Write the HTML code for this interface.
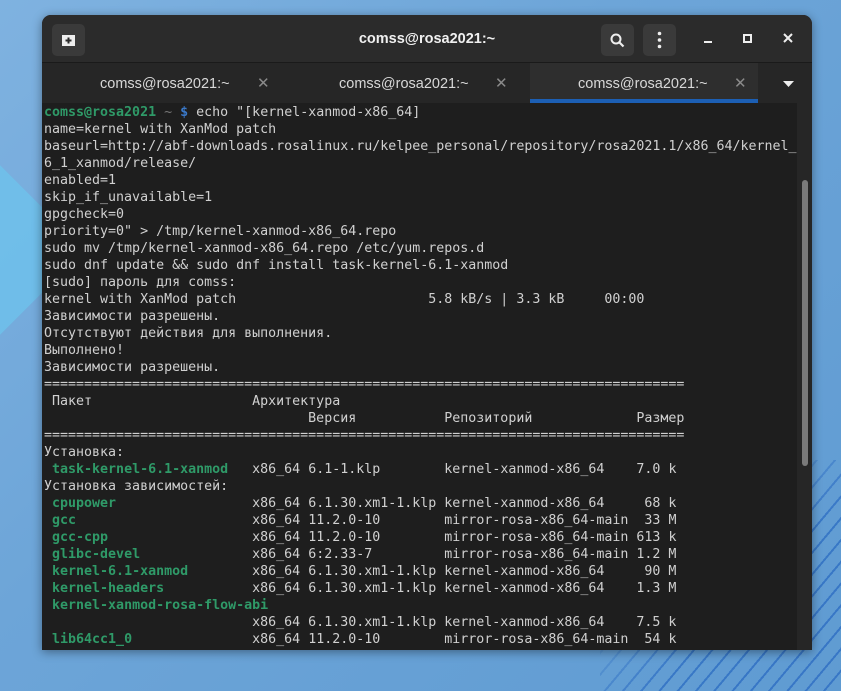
<!DOCTYPE html>
<html style="width:841px;height:691px;overflow:hidden"><head><meta charset="utf-8"><style>
*{margin:0;padding:0;box-sizing:border-box}
body{width:841px;height:691px;overflow:hidden;position:relative;
background:linear-gradient(135deg,#7fb2e0 0%,#6da5d8 40%,#5f9bd2 100%);font-family:"Liberation Sans",sans-serif}
.dia{position:absolute;left:-60px;top:190px;width:120px;height:120px;transform:rotate(45deg);background:#6cc4ee;opacity:.7}
.stripes{position:absolute;left:600px;top:460px;width:241px;height:231px;
background:repeating-linear-gradient(-50deg,transparent 0 12px,#2f6fc4 12px 14px);opacity:.8;
-webkit-mask:linear-gradient(135deg,transparent 35%,#000 60%)}
.win{position:absolute;left:42px;top:15px;width:770px;height:635px;background:#1e1e1e;border-radius:9px 9px 0 0;overflow:hidden;box-shadow:0 2px 10px rgba(0,0,0,.4)}
.hdr{position:absolute;left:0;top:0;width:770px;height:48px;background:#2b2b2b;border-bottom:1px solid #1a1a1a}
.title{position:absolute;left:0;width:770px;top:16px;text-align:center;color:#f0f0f0;font-weight:bold;font-size:14.5px}
.btn{position:absolute;top:9px;width:33px;height:32px;background:#3a3a3a;border-radius:5px}
.tabs{position:absolute;left:0;top:48px;width:770px;height:40px;background:#262626}
.tab{position:absolute;top:1px;height:40px;color:#d8d8d8;font-size:14.5px;line-height:40px}
.x{position:absolute;top:1px;color:#8a8a8a;font-size:15px;line-height:40px}
.term{position:absolute;left:2px;top:89px;font-family:"DejaVu Sans Mono","Liberation Mono",monospace;font-size:13.3px;line-height:17px;color:#d0d0d0;white-space:pre}
.g{color:#2f9a68;font-weight:bold}
.b{color:#3a78c8;font-weight:bold}
.gr{color:#777}
.sb{position:absolute;left:755px;top:88px;width:15px;height:547px;background:#262626}
.th{position:absolute;left:760px;top:165px;width:6px;height:286px;background:#7a7a7a;border-radius:3px}
</style></head><body>
<div class="dia"></div><div class="stripes"></div>
<div class="win">
 <div class="hdr">
  <div class="btn" style="left:10px"><svg width="33" height="32"><path d="M10 11h13v11H10z" fill="#eee"/><path d="M16.5 13.5v6M13.5 16.5h6" stroke="#2b2b2b" stroke-width="2"/></svg></div>
  <div class="title">comss@rosa2021:~</div>
  <div class="btn" style="left:559px"><svg width="33" height="32"><circle cx="15" cy="15" r="4.5" fill="none" stroke="#eee" stroke-width="2"/><path d="M18.5 18.5l4 4" stroke="#eee" stroke-width="2.2"/></svg></div>
  <div class="btn" style="left:601px"><svg width="33" height="32"><circle cx="16.5" cy="9.5" r="1.8" fill="#eee"/><circle cx="16.5" cy="16" r="1.8" fill="#eee"/><circle cx="16.5" cy="22.5" r="1.8" fill="#eee"/></svg></div>
  <svg style="position:absolute;left:655px;top:14px" width="110" height="20"><path d="M7 13h8" stroke="#eee" stroke-width="2"/><rect x="47" y="6" width="7" height="7" fill="none" stroke="#eee" stroke-width="2"/><path d="M87 5l8 8M95 5l-8 8" stroke="#eee" stroke-width="2"/></svg>
 </div>
 <div class="tabs">
  <div class="tab" style="left:58px">comss@rosa2021:~</div><div class="x" style="left:215px">✕</div>
  <div class="tab" style="left:297px">comss@rosa2021:~</div><div class="x" style="left:453px">✕</div>
  <div style="position:absolute;left:488px;top:0;width:228px;height:40px;background:#2e2e2e;border-bottom:4px solid #1c5fb4"></div>
  <div class="tab" style="left:536px">comss@rosa2021:~</div><div class="x" style="left:692px">✕</div>
  <svg style="position:absolute;left:740px;top:16px" width="14" height="10"><path d="M1 2h11L6.5 8z" fill="#eee"/></svg>
 </div>
 <div class="sb"></div><div class="th"></div>
<div class="term"><span class="g">comss@rosa2021</span> <span class="gr">~</span> <span class="b">$</span> echo "[kernel-xanmod-x86_64]
name=kernel with XanMod patch
baseurl=http://abf-downloads.rosalinux.ru/kelpee_personal/repository/rosa2021.1/x86_64/kernel_
6_1_xanmod/release/
enabled=1
skip_if_unavailable=1
gpgcheck=0
priority=0" &gt; /tmp/kernel-xanmod-x86_64.repo
sudo mv /tmp/kernel-xanmod-x86_64.repo /etc/yum.repos.d
sudo dnf update &amp;&amp; sudo dnf install task-kernel-6.1-xanmod
[sudo] пароль для comss:
kernel with XanMod patch                        5.8 kB/s | 3.3 kB     00:00
Зависимости разрешены.
Отсутствуют действия для выполнения.
Выполнено!
Зависимости разрешены.
================================================================================
 Пакет                    Архитектура
                                 Версия           Репозиторий             Размер
================================================================================
Установка:
 <span class="g">task-kernel-6.1-xanmod</span>   x86_64 6.1-1.klp        kernel-xanmod-x86_64    7.0 k
Установка зависимостей:
 <span class="g">cpupower</span>                 x86_64 6.1.30.xm1-1.klp kernel-xanmod-x86_64     68 k
 <span class="g">gcc</span>                      x86_64 11.2.0-10        mirror-rosa-x86_64-main  33 M
 <span class="g">gcc-cpp</span>                  x86_64 11.2.0-10        mirror-rosa-x86_64-main 613 k
 <span class="g">glibc-devel</span>              x86_64 6:2.33-7         mirror-rosa-x86_64-main 1.2 M
 <span class="g">kernel-6.1-xanmod</span>        x86_64 6.1.30.xm1-1.klp kernel-xanmod-x86_64     90 M
 <span class="g">kernel-headers</span>           x86_64 6.1.30.xm1-1.klp kernel-xanmod-x86_64    1.3 M
 <span class="g">kernel-xanmod-rosa-flow-abi</span>
                          x86_64 6.1.30.xm1-1.klp kernel-xanmod-x86_64    7.5 k
 <span class="g">lib64cc1_0</span>               x86_64 11.2.0-10        mirror-rosa-x86_64-main  54 k</div>
</div>
</body></html>
